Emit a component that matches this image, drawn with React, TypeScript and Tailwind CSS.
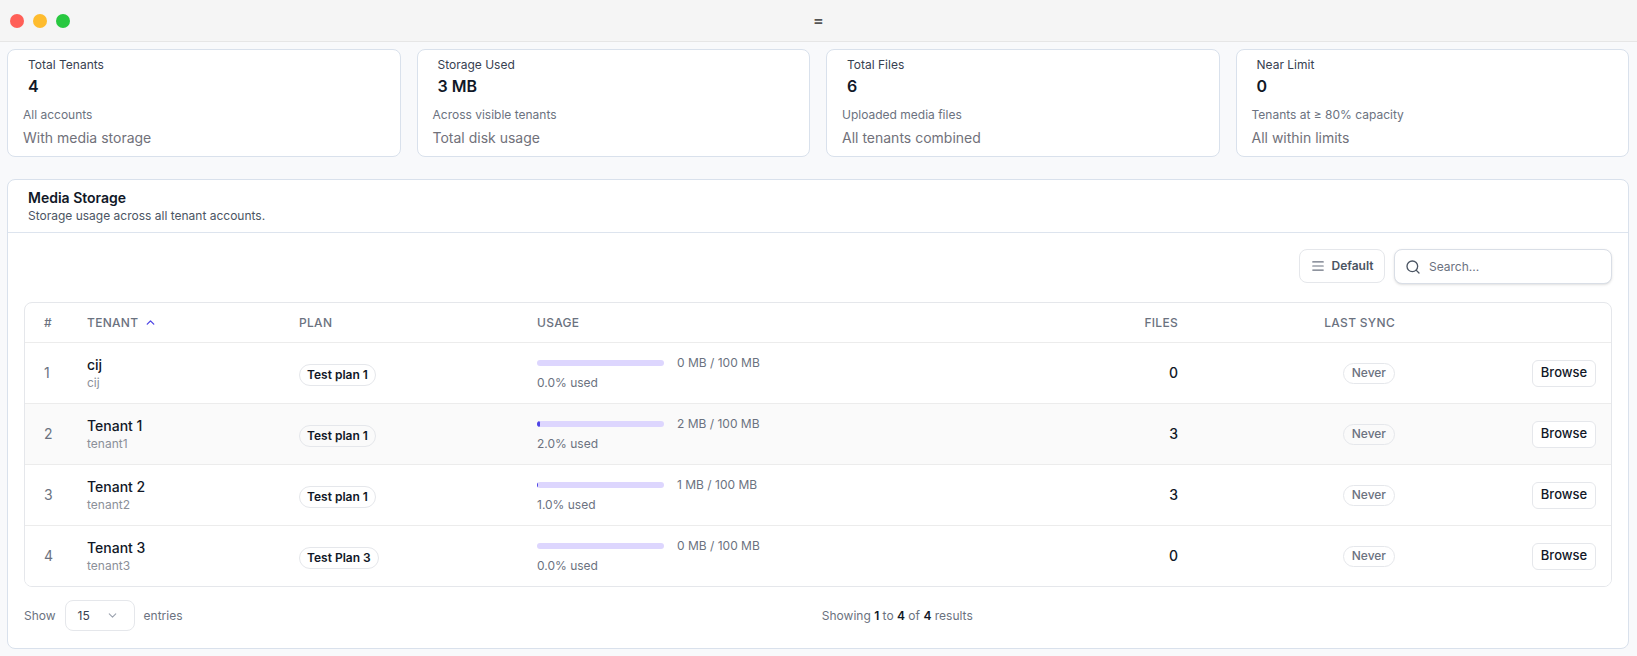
import { AlignJustify, ChevronDown, ChevronUp, Search } from "lucide-react"

type Row = {
  id: number
  name: string
  slug: string
  plan: string
  used: number
  files: number
}

const stats = [
  { title: "Total Tenants", value: "4", desc: "All accounts", note: "With media storage" },
  { title: "Storage Used", value: "3 MB", desc: "Across visible tenants", note: "Total disk usage" },
  { title: "Total Files", value: "6", desc: "Uploaded media files", note: "All tenants combined" },
  { title: "Near Limit", value: "0", desc: "Tenants at ≥ 80% capacity", note: "All within limits" },
]

const rows: Row[] = [
  { id: 1, name: "cij", slug: "cij", plan: "Test plan 1", used: 0, files: 0 },
  { id: 2, name: "Tenant 1", slug: "tenant1", plan: "Test plan 1", used: 2, files: 3 },
  { id: 3, name: "Tenant 2", slug: "tenant2", plan: "Test plan 1", used: 1, files: 3 },
  { id: 4, name: "Tenant 3", slug: "tenant3", plan: "Test Plan 3", used: 0, files: 0 },
]

const cols = "grid grid-cols-[42px_213px_238px_1fr_139px_217px_195px]"

function StatCard({ title, value, desc, note }: (typeof stats)[number]) {
  return (
    <div className="h-[108px] rounded-lg border border-[#d9e1ec] bg-white pt-[6px]">
      <div className="pl-5 text-xs leading-[18px] text-[#374151]">{title}</div>
      <div className="pl-5 text-base leading-6 font-semibold text-[#111827]">{value}</div>
      <div className="mt-[9px] pl-[15px] text-xs leading-4 text-[#6b7280]">{desc}</div>
      <div className="mt-[5px] pl-[15px] text-sm leading-5 text-[#71717a]">{note}</div>
    </div>
  )
}

function TableRow({ row, shaded }: { row: Row; shaded: boolean }) {
  return (
    <div className={`${cols} h-[61px] items-center border-t border-[#ececec] ${shaded ? "bg-[#fafafa]" : "bg-white"}`}>
      <div className="pl-[19px] text-sm text-[#6b7280]">{row.id}</div>
      <div className="pl-5">
        <div className="text-sm leading-5 font-medium text-[#111827]">{row.name}</div>
        <div className="text-xs leading-4 text-[#8b9099]">{row.slug}</div>
      </div>
      <div className="pl-[19px]">
        <span className="inline-flex h-[22px] items-center rounded-full border border-[#e5e7eb] px-[7px] text-xs font-semibold text-[#111827]">
          {row.plan}
        </span>
      </div>
      <div className="flex flex-col gap-1 pl-[19px]">
        <div className="flex items-center gap-[13px]">
          <div className="h-[6px] w-[127px] overflow-hidden rounded-full bg-[#ddd6fe]">
            <div className="h-full rounded-full bg-[#4f46e5]" style={{ width: `${row.used}%` }} />
          </div>
          <span className="text-xs leading-4 text-[#6b7280]">{row.used} MB / 100 MB</span>
        </div>
        <span className="text-xs leading-4 text-[#6b7280]">{row.used.toFixed(1)}% used</span>
      </div>
      <div className="pr-[21px] text-right text-sm font-medium text-[#111827]">{row.files}</div>
      <div className="flex justify-end pr-[21px]">
        <span className="inline-flex h-[21px] items-center rounded-full border border-[#e5e7eb] px-2 text-xs font-medium text-[#6b7280]">
          Never
        </span>
      </div>
      <div className="flex justify-end pr-[15px]">
        <button className="h-[27px] w-16 rounded-md border border-[#e5e7eb] bg-white text-[13px] font-medium text-[#111827]">
          Browse
        </button>
      </div>
    </div>
  )
}

export default function App() {
  return (
    <div className="h-[656px] w-[1637px] overflow-hidden bg-[#f8f9fb] font-['Inter',sans-serif]">
      {/* window chrome */}
      <div className="relative flex h-[42px] items-center border-b border-[#e6e6e6] bg-[#f5f5f5] pl-[10px]">
        <div className="flex gap-[9px]">
          <span className="h-[14px] w-[14px] rounded-full bg-[#ff5f57]" />
          <span className="h-[14px] w-[14px] rounded-full bg-[#febc2e]" />
          <span className="h-[14px] w-[14px] rounded-full bg-[#28c840]" />
        </div>
        <span className="absolute left-[813px] top-[8px] text-base font-semibold text-[#555]">=</span>
      </div>

      <div className="pl-[7px] pr-2 pt-[7px]">
        <div className="grid grid-cols-4 gap-4">
          {stats.map((s) => (
            <StatCard key={s.title} {...s} />
          ))}
        </div>

        <div className="mt-[22px] h-[470px] rounded-lg border border-[#d9e1ec] bg-white">
          <div className="h-[53px] border-b border-[#dde4ee] pl-[20px] pt-[8px]">
            <div className="text-sm leading-5 font-semibold text-[#111827]">Media Storage</div>
            <div className="text-xs leading-4 text-[#4b5563]">Storage usage across all tenant accounts.</div>
          </div>

          <div className="px-4 pt-4">
            <div className="flex justify-end gap-[9px]">
              <button className="flex h-[34px] w-[86px] items-center justify-center gap-[7px] rounded-lg border border-[#e5e7eb] bg-white text-xs font-semibold text-[#4b5563]">
                <AlignJustify size={14} className="text-[#6b7280]" />
                Default
              </button>
              <div className="flex h-[35px] w-[218px] items-center gap-[8px] rounded-lg border border-[#d9dee6] bg-white pl-[10px] shadow-sm">
                <Search size={16} className="text-[#4b5563]" />
                <span className="text-xs text-[#6b7280]">Search...</span>
              </div>
            </div>

            <div className="mt-[18px] overflow-hidden rounded-lg border border-[#e5e7eb]">
              <div className={`${cols} h-[39px] items-center text-xs font-medium tracking-wide text-[#6b7280]`}>
                <div className="pl-[19px]">#</div>
                <div className="flex items-center gap-[6px] pl-5">
                  TENANT
                  <ChevronUp size={13} strokeWidth={2.5} className="text-[#4f46e5]" />
                </div>
                <div className="pl-[19px]">PLAN</div>
                <div className="pl-[19px]">USAGE</div>
                <div className="pr-[21px] text-right">FILES</div>
                <div className="pr-[21px] text-right">LAST SYNC</div>
                <div />
              </div>
              {rows.map((r, i) => (
                <TableRow key={r.id} row={r} shaded={i === 1} />
              ))}
            </div>

            <div className="mt-[13px] flex items-center justify-between">
              <div className="flex items-center gap-[9px] text-xs text-[#6b7280]">
                <span>Show</span>
                <div className="flex h-[31px] w-[70px] items-center justify-between rounded-lg border border-[#e5e7eb] pl-[12px] pr-[15px] text-xs text-[#374151]">
                  15
                  <ChevronDown size={13} className="text-[#9ca3af]" />
                </div>
                <span>entries</span>
              </div>
              <div className="text-xs text-[#6b7280]">
                Showing <span className="font-semibold text-[#111827]">1</span> to{" "}
                <span className="font-semibold text-[#111827]">4</span> of{" "}
                <span className="font-semibold text-[#111827]">4</span> results
              </div>
              <div />
            </div>
          </div>
        </div>
      </div>
    </div>
  )
}
